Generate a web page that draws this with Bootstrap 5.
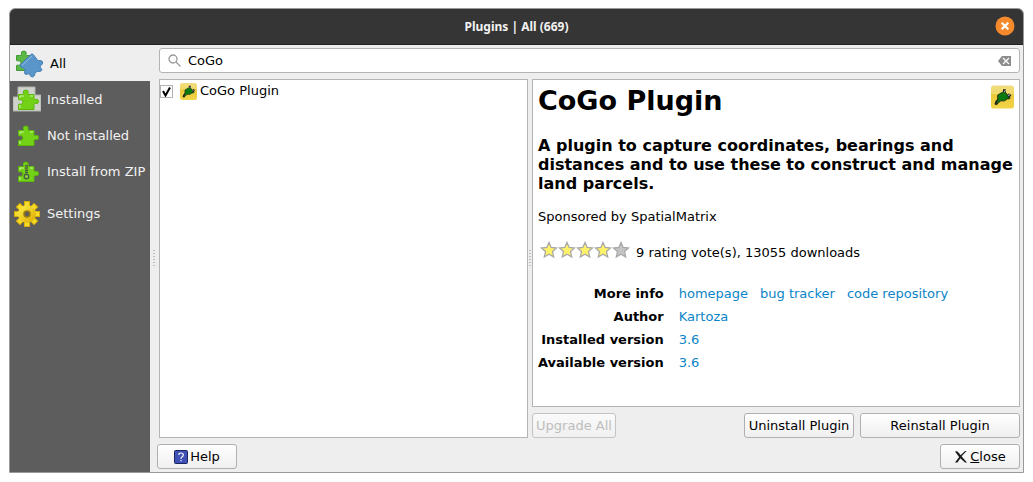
<!DOCTYPE html>
<html lang="en">
<head>
<meta charset="utf-8">
<meta name="viewport" content="width=device-width, initial-scale=1">
<title>Plugins | All (669)</title>
<link href="https://cdn.jsdelivr.net/npm/bootstrap@5.3.0/dist/css/bootstrap.min.css" rel="stylesheet">
<style>
body { font: 13px/16px "DejaVu Sans", sans-serif; color: #000; background: #fff; padding: 8px 9px 9px; }
.dialog { border: 1px solid #999; border-radius: 6px 6px 0 0; background: #eee; overflow: hidden; }
.titlebar { height: 36px; background: #353535; border-bottom: 1px solid #222; color: #f2f2f2; }
.titlebar h2 { font: 700 12px/16px "Noto Sans", sans-serif; }
.titlebar button { right: 8px; top: 7px; }
.side { width: 140px; background: #5d5d5d; }
.side a { height: 36px; padding: 2px 0 0 3px; gap: 6px; color: #f2f2f2; text-decoration: none; white-space: nowrap; }
.side a svg { flex: none; }
.side a.active { background: #eee; color: #000; padding-left: 5px; gap: 7px; }
.side a.settings { margin-top: 6px; }
.main { padding: 3px 3px 3px 0; gap: 6px; }
.inset { margin-left: 2px; }
.grip { flex: none; height: 18px; width: 2px; background: repeating-linear-gradient(#bbb 0 1px, transparent 1px 3px); align-self: center; }
.splitter { flex: none; display: flex; justify-content: center; }
.splitter.outer { width: 7px; }
.splitter.inner { width: 4px; }
.box { background: #fff; border: 1px solid #b4b4b4; }
.search { height: 25px; border-radius: 3px; padding: 0 8px; gap: 7px; }
.search input { border: 0; outline: 0; padding: 0; background: none; min-width: 0; }
.plugins { flex: 367 1 0; }
.details-col { flex: 488 1 0; min-width: 0; gap: 6px; }
.plugins label { height: 22px; gap: 3px; }
.tick { appearance: none; width: 13px; height: 13px; margin: 0 4px 0 0; border: 1px solid #b4b4b4; background: #fff url("data:image/svg+xml,%3Csvg xmlns='http://www.w3.org/2000/svg' viewBox='0 0 11 11'%3E%3Cpath d='M2 5l2.5 4.5L9 1.5' fill='none' stroke='%23000' stroke-width='2'/%3E%3C/svg%3E"); }
.details { padding: 5px; }
.details h1 { font-size: 27px; font-weight: 700; line-height: 32px; margin: 0 0 19px; }
.details h3 { font-size: 16px; font-weight: 700; line-height: 19px; margin: 0 0 16px; }
.rating { margin: 16px 0 25px; gap: 6px; padding-left: 2px; }
.facts th { text-align: right; padding: 0 15px 7px 3px; font-weight: 700; }
.facts td { padding: 0 0 7px; }
.facts { margin-left: -3px; }
.facts a { color: #0a84c8; text-decoration: none; margin-right: 12px; }
.push { height: 25px; padding: 0 3px; border: 1px solid #b0b0b0; border-radius: 3px; background: linear-gradient(#fff, #efefef); font: inherit; color: #000; white-space: nowrap; }
.push:disabled { color: #bebebe; border-color: #c4c4c4; background: linear-gradient(#fafafa, #f0f0f0); }
.push.w-s { width: 80px; }
.push.w-u { width: 84px; }
.push.w-m { width: 110px; }
.push.w-l { width: 160px; }
.push-row { gap: 6px; }
.icon-gap { gap: 2px; }
</style>
</head>
<body class="vh-100 d-flex flex-column">
<svg class="position-absolute" width="0" height="0" aria-hidden="true">
  <defs>
    <linearGradient id="gold" x1="0" y1="0" x2="0" y2="1"><stop offset="0" stop-color="#f0dc80"/><stop offset=".35" stop-color="#f0da68"/><stop offset=".4" stop-color="#ecc83a"/><stop offset="1" stop-color="#f1d548"/></linearGradient>
    <linearGradient id="sun" x1="0" y1="0" x2="1" y2="1"><stop offset="0" stop-color="#fff04a"/><stop offset="1" stop-color="#dba800"/></linearGradient>
  </defs>
  <symbol id="piece" viewBox="0 0 22 22">
    <path d="M1.500 5.500H6.500Q7 5 6.300 4Q5.800 1 8.800 1Q11.800 1 11.200 4Q10.500 5 11.500 5.500H17V10Q17.500 11 18.500 10.300Q21.500 9.800 21.500 12.500Q21.500 15.200 18.500 14.500Q17.500 14 17 15V20.500H1.500V15.500Q2.500 14.700 3.500 15.300Q6 15.500 6 13Q6 10.500 3.500 10.800Q2.500 11.300 1.500 10.500Z"/>
  </symbol>
  <symbol id="plug" viewBox="0 0 24 24">
    <rect width="24" height="24" rx="3" fill="url(#gold)"/>
    <path d="M5 20l1-3 3-3" fill="none" stroke="#222" stroke-width="3"/>
    <path d="M12 7l2-1 6 7-1 1-2 0-3 2-4 0-2 2-3 2 2-5 0-5z" fill="#087a10" stroke="#252b10" stroke-width="1"/>
    <path d="M14 7l0-3M18 12l2-3" stroke="#222" stroke-width="3"/>
    <path d="M14 7l1-2M18 11l2-2" stroke="#ddd" stroke-width="1"/>
  </symbol>
  <symbol id="star" viewBox="0 0 18 18"><path d="M9 1.500l2.200 5 5.300.5-4 3.600 1.200 5.400L9 13.200 4.300 16l1.200-5.400-4-3.600 5.300-.5z" stroke="#a8a8a8" stroke-width="1.300"/></symbol>
</svg>

<div class="dialog flex-grow-1 d-flex flex-column">
  <header class="titlebar position-relative d-flex align-items-center justify-content-center flex-shrink-0">
    <h2 class="m-0">Plugins | All (669)</h2>
    <button type="button" class="position-absolute border-0 p-0 bg-transparent d-flex" aria-label="Close window">
      <svg width="20" height="20" viewBox="0 0 20 20"><circle cx="10" cy="10" r="9.500" fill="#f58a2c"/><path d="M6.700 6.700l6.600 6.600M13.300 6.700l-6.600 6.600" stroke="#fff" stroke-width="2.200"/></svg>
    </button>
  </header>

  <div class="d-flex flex-grow-1">
    <nav class="side flex-shrink-0">
      <a href="#" class="active d-flex align-items-center">
        <svg width="28" height="28" viewBox="0 0 28 28"><use href="#piece" width="22" height="22" fill="#5cb846" stroke="#459a38"/><path d="M5 15L16.500 4Q18 3.500 19 5.500L21 8Q22 9.500 23 11Q25 9.500 27.500 11.500Q29 14 25 16Q25 17 27 20Q26 22 22.500 21.500L20 22.500Q20 27 17 27Q14.500 26 14.500 23.500L11 24.500Q8.500 24 10 20.500Q10 18 7 17.500Q5 17 5 15Z" fill="#5b96ca" stroke="#4680b4"/><path d="M7 15.500L17 6" stroke="#94bfe4"/></svg>
        All</a>
      <a href="#" class="d-flex align-items-center">
        <svg width="28" height="28" viewBox="0 0 28 28"><path d="M5 1H22V9H28V25H0V11H5Z" fill="#cfd2cb" stroke="#b0b3ac"/><use href="#piece" x="4" y="3" width="22" height="22" fill="#73d216" stroke="#5cb80c"/><path d="M7 12v-2h4M17 10h3M7 19v3" stroke="#cef5a0" fill="none"/></svg>
        Installed</a>
      <a href="#" class="d-flex align-items-center">
        <svg width="28" height="28" viewBox="0 0 28 28"><use href="#piece" x="4" y="3" width="22" height="22" fill="#73d216" stroke="#5cb80c"/><path d="M7 12v-2h4M17 10h3M7 19v3" stroke="#cef5a0" fill="none"/></svg>
        Not installed</a>
      <a href="#" class="d-flex align-items-center">
        <svg width="28" height="28" viewBox="0 0 28 28"><use href="#piece" x="4" y="3" width="22" height="22" fill="#73d216" stroke="#5cb80c"/><path d="M7 12v-2h4M17 10h3M7 19v3" stroke="#cef5a0" fill="none"/><path d="M13.500 7v10" stroke="#4b5c40" stroke-width="3" stroke-dasharray="1.500 .7"/><circle cx="13.500" cy="18.500" r="2.200" fill="#8bd84a" stroke="#4b5c40" stroke-width="1.400"/></svg>
        Install from ZIP</a>
      <a href="#" class="settings d-flex align-items-center">
        <svg width="28" height="28" viewBox="0 0 28 28"><g stroke="#d9ad08" stroke-width="6"><path d="M14 1V27M1 14H27M4.800 4.800L23.200 23.200M23.200 4.800L4.800 23.200"/></g><g stroke="#f5dc28" stroke-width="4"><path d="M14 2V26M2 14H26M5.500 5.500L22.500 22.500M22.500 5.500L5.500 22.500"/></g><circle cx="14" cy="14" r="9" fill="url(#sun)"/><circle cx="14" cy="14" r="3" fill="#5d5d5d" stroke="#9a7c10" stroke-width="1.500"/></svg>
        Settings</a>
    </nav>

    <div class="splitter outer"><span class="grip"></span></div>

    <main class="main flex-grow-1 d-flex flex-column">
      <div class="box search inset d-flex align-items-center">
        <svg width="13" height="13" viewBox="0 0 13 13" fill="none" stroke="#999" stroke-width="1.300"><circle cx="5" cy="5" r="4"/><path d="M8 8l4.500 4.500"/></svg>
        <input class="flex-grow-1" type="text" value="CoGo" aria-label="Search plugins">
        <button type="button" class="border-0 p-0 bg-transparent d-flex" aria-label="Clear search"><svg width="13" height="10" viewBox="0 0 13 10"><path d="M4 0H13V10H4L0 5Z" fill="#8d8d8d"/><path d="M5 2l6 6M11 2l-6 6" stroke="#fff" stroke-width="1.200"/></svg></button>
      </div>

      <div class="inset d-flex flex-grow-1">
        <div class="box plugins">
          <label class="d-flex align-items-center"><input class="tick" type="checkbox" checked><svg width="17" height="17"><use href="#plug"/></svg>CoGo Plugin</label>
        </div>
        <div class="splitter inner"><span class="grip"></span></div>
        <div class="details-col d-flex flex-column">
          <section class="box details flex-grow-1">
            <div class="d-flex justify-content-between align-items-start">
              <h1>CoGo Plugin</h1>
              <svg width="23" height="24"><use href="#plug" width="23" height="24"/></svg>
            </div>
            <h3>A plugin to capture coordinates, bearings and distances and to use these to construct and manage land parcels.</h3>
            <p class="m-0">Sponsored by SpatialMatrix</p>
            <div class="rating d-flex align-items-end">
              <svg width="90" height="20" viewBox="0 0 90 20" role="img" aria-label="4 of 5 stars"><g fill="#fff26b"><use href="#star" width="18" height="18"/><use href="#star" x="18" width="18" height="18"/><use href="#star" x="36" width="18" height="18"/><use href="#star" x="54" width="18" height="18"/></g><use href="#star" x="72" width="18" height="18" fill="#c4c4c4"/></svg>
              <span>9 rating vote(s), 13055 downloads</span>
            </div>
            <table class="facts">
              <tr><th scope="row">More info</th><td><a href="#">homepage</a><a href="#">bug tracker</a><a href="#">code repository</a></td></tr>
              <tr><th scope="row">Author</th><td><a href="#">Kartoza</a></td></tr>
              <tr><th scope="row">Installed version</th><td><a href="#">3.6</a></td></tr>
              <tr><th scope="row">Available version</th><td><a href="#">3.6</a></td></tr>
            </table>
          </section>
          <div class="push-row d-flex">
            <button type="button" class="push w-u me-auto" disabled>Upgrade All</button>
            <button type="button" class="push w-m">Uninstall Plugin</button>
            <button type="button" class="push w-l">Reinstall Plugin</button>
          </div>
        </div>
      </div>

      <div class="d-flex justify-content-between">
        <button type="button" class="push w-s icon-gap d-flex align-items-center justify-content-center">
          <svg width="14" height="14" viewBox="0 0 14 14"><rect x=".5" y=".5" width="13" height="13" rx="1" fill="#3f51b5" stroke="#1a2560"/><path d="M4.800 5Q4.800 3 7 3Q9.300 3 9.300 5Q9.300 6.300 7.800 7Q7 7.500 7 8.700M7 10v1.300" fill="none" stroke="#fff" stroke-width="1.200"/></svg>
          Help</button>
        <button type="button" class="push w-s icon-gap d-flex align-items-center justify-content-center">
          <svg width="14" height="14" viewBox="0 0 14 14" fill="#1c1c1c"><path d="M1 1.500Q3 .5 4.500 2.500Q8 7 13 12.500L11 12.500Q5 8 1 1.500Z"/><path d="M12.500 1L11 1Q5 6 1 12.500L3.500 12.500Q7 6 12.500 1Z"/></svg>
          <span><u>C</u>lose</span></button>
      </div>
    </main>
  </div>
</div>
<script src="https://cdn.jsdelivr.net/npm/bootstrap@5.3.0/dist/js/bootstrap.bundle.min.js"></script>
</body>
</html>
